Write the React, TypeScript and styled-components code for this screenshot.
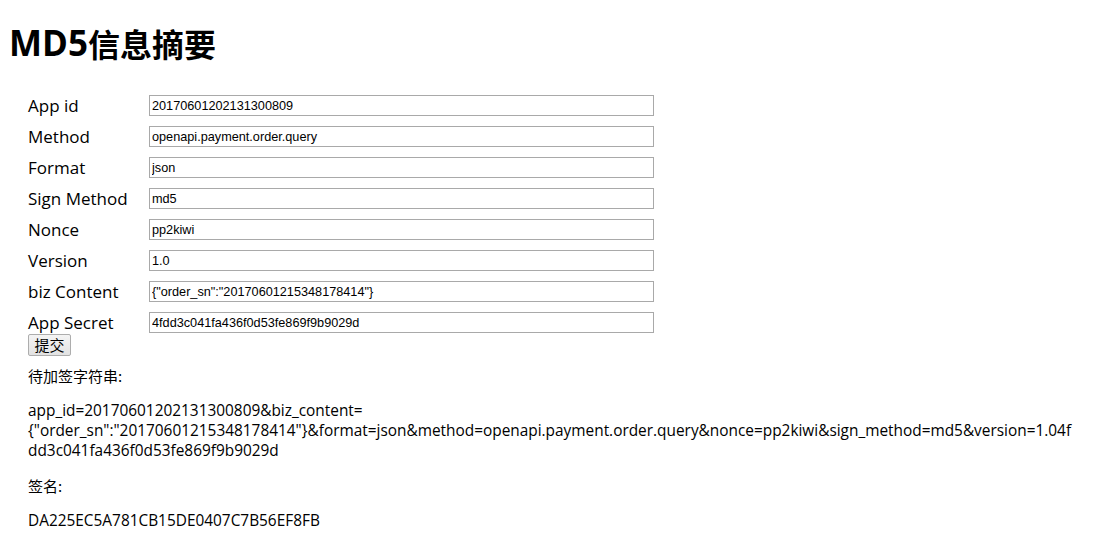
import React from "react";
import styled, { createGlobalStyle } from "styled-components";

const GlobalStyle = createGlobalStyle`
  html, body {
    margin: 0;
    padding: 0;
    background: #ffffff;
    color: #000000;
  }
  body {
    font-family: "Open Sans", "Noto Sans CJK SC", sans-serif;
  }
  * { box-sizing: border-box; }
`;

const Page = styled.div`
  padding: 0 8px;
  width: 1099px;
`;

const Title = styled.h1`
  margin: 21px 0 0 0;
  height: 44px;
  line-height: 44px;
  font-size: 32px;
  font-weight: 700;
  font-family: "Noto Sans CJK SC", sans-serif;
  display: flex;
  align-items: center;
`;

const TitleLatin = styled.span`
  font-family: "Open Sans", sans-serif;
  font-size: 35px;
  font-weight: 700;
  margin-left: 1px;
`;

const Form = styled.form`
  display: flex;
  flex-direction: column;
  gap: 10px;
  padding: 30px 0 0 20px;
`;

const Row = styled.div`
  display: flex;
  align-items: flex-start;
  height: 21px;
`;

const Label = styled.label`
  width: 121px;
  font-family: "Open Sans", "Noto Sans CJK SC", sans-serif;
  font-size: 17px;
  line-height: 21px;
  white-space: nowrap;
`;

const Field = styled.input`
  width: 505px;
  height: 21px;
  border: 1px solid #a9a9a9;
  padding: 1px 2px;
  margin: 0;
  font-family: "Liberation Sans", Arial, sans-serif;
  font-size: 12.7px;
  color: #000;
  background: #fff;
  outline: none;
`;

const SubmitButton = styled.button`
  width: 43px;
  height: 22px;
  margin-top: -9px;
  padding: 0;
  border: 1px solid #adadad;
  border-radius: 2px;
  background: linear-gradient(#f4f4f4, #e2e2e2);
  font-family: "Noto Sans CJK SC", sans-serif;
  font-size: 15px;
  line-height: 20px;
  color: #000;
  align-self: flex-start;
`;

const Result = styled.div`
  display: flex;
  flex-direction: column;
  gap: 15px;
  margin-top: 10px;
  padding-left: 20px;
`;

const Para = styled.p`
  margin: 0;
  font-family: "Open Sans", "Noto Sans CJK SC", sans-serif;
  font-size: 15.4px;
  line-height: 20px;
  overflow-wrap: anywhere;
`;

const CjkPara = styled(Para)`
  font-family: "Noto Sans CJK SC", sans-serif;
  font-size: 15px;
`;

const fields: { label: string; value: string }[] = [
  { label: "App id", value: "20170601202131300809" },
  { label: "Method", value: "openapi.payment.order.query" },
  { label: "Format", value: "json" },
  { label: "Sign Method", value: "md5" },
  { label: "Nonce", value: "pp2kiwi" },
  { label: "Version", value: "1.0" },
  { label: "biz Content", value: '{"order_sn":"20170601215348178414"}' },
  { label: "App Secret", value: "4fdd3c041fa436f0d53fe869f9b9029d" },
];

export default function App() {
  return (
    <Page>
      <GlobalStyle />
      <Title>
        <TitleLatin>MD5</TitleLatin>信息摘要
      </Title>
      <Form onSubmit={(e) => e.preventDefault()}>
        {fields.map((f) => (
          <Row key={f.label}>
            <Label>{f.label}</Label>
            <Field type="text" defaultValue={f.value} />
          </Row>
        ))}
        <SubmitButton type="submit">提交</SubmitButton>
      </Form>
      <Result>
        <CjkPara>待加签字符串:</CjkPara>
        <Para>
          app_id=20170601202131300809&amp;biz_content=
          <br />
          {'{"order_sn":"20170601215348178414"}&format=json&method=openapi.payment.order.query&nonce=pp2kiwi&sign_method=md5&version=1.04f'}
          <br />
          dd3c041fa436f0d53fe869f9b9029d
        </Para>
        <CjkPara>签名:</CjkPara>
        <Para>DA225EC5A781CB15DE0407C7B56EF8FB</Para>
      </Result>
    </Page>
  );
}
